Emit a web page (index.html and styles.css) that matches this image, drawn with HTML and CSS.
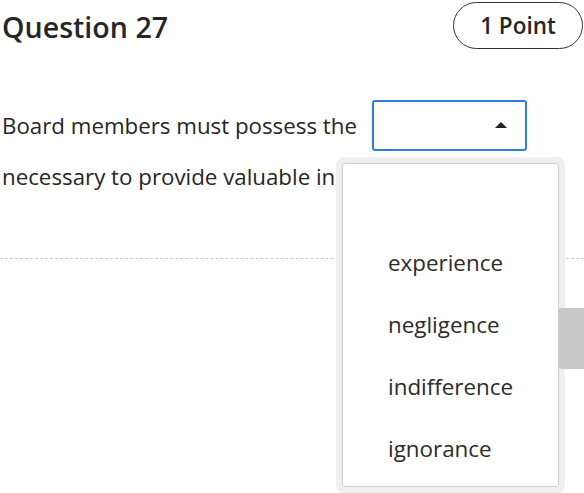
FILE: index.html
```html
<!DOCTYPE html>
<html>
<head>
<meta charset="utf-8">
<link rel="stylesheet" href="styles.css">
</head>
<body>
<div class="page">
  <div class="header">
    <h1 class="title">Question 27</h1>
    <div class="points">1 Point</div>
  </div>
  <div class="question">
    <div class="line">Board members must possess the <span class="select"><span class="arrow"></span></span></div>
    <div class="line">necessary to provide valuable insights.</div>
  </div>
  <div class="divider"></div>
  <div class="dropdown">
    <ul class="options">
      <li class="option">experience</li>
      <li class="option">negligence</li>
      <li class="option">indifference</li>
      <li class="option">ignorance</li>
    </ul>
  </div>
  <div class="thumb"></div>
</div>
</body>
</html>
```
FILE: styles.css
```css
html, body {
  margin: 0;
  padding: 0;
  background: #fff;
}
body {
  width: 584px;
  height: 493px;
  overflow: hidden;
  font-family: "Open Sans", "Noto Sans", sans-serif;
  color: #262626;
}
.page {
  position: relative;
  height: 493px;
}
.header {
  display: flex;
  justify-content: space-between;
  align-items: flex-start;
  padding: 2px 1px 0 2px;
}
.title {
  margin: 7px 0 0 0;
  font-size: 28.6px;
  font-weight: 600;
  line-height: 36px;
}
.points {
  width: 128px;
  height: 45px;
  border: 1px solid #333;
  border-radius: 24px;
  display: flex;
  align-items: center;
  justify-content: center;
  font-size: 22.5px;
  font-weight: 600;
}
.question {
  margin-top: 51px;
  padding-left: 2px;
  font-size: 22.3px;
  white-space: nowrap;
  overflow: hidden;
}
.line {
  height: 51px;
  line-height: 51px;
}
.select {
  display: inline-block;
  vertical-align: top;
  position: relative;
  width: 151px;
  height: 47px;
  margin-left: 9px;
  border: 2px solid #2b7de0;
  border-radius: 3px;
  box-sizing: content-box;
}
.arrow {
  position: absolute;
  right: 18px;
  top: 20px;
  width: 0;
  height: 0;
  border-left: 6px solid transparent;
  border-right: 6px solid transparent;
  border-bottom: 6px solid #222;
}
.divider {
  margin-top: 56px;
  border-top: 1px dashed #cccccc;
}
.dropdown {
  position: absolute;
  left: 336px;
  top: 157px;
  width: 217px;
  height: 324px;
  padding: 6px;
  background: #efefef;
  border-radius: 8px;
}
.options {
  list-style: none;
  margin: 0;
  height: 100%;
  box-sizing: border-box;
  padding: 68px 0 0 45px;
  background: #fff;
  border: 1px solid #cfcfcf;
  border-radius: 3px;
}
.option {
  height: 62px;
  line-height: 62px;
  font-size: 22.4px;
  color: #2b2b2b;
}
.thumb {
  position: absolute;
  right: 0;
  top: 308px;
  width: 26px;
  height: 61px;
  background: #c8c8c8;
  border-radius: 4px 0 0 4px;
}
```
